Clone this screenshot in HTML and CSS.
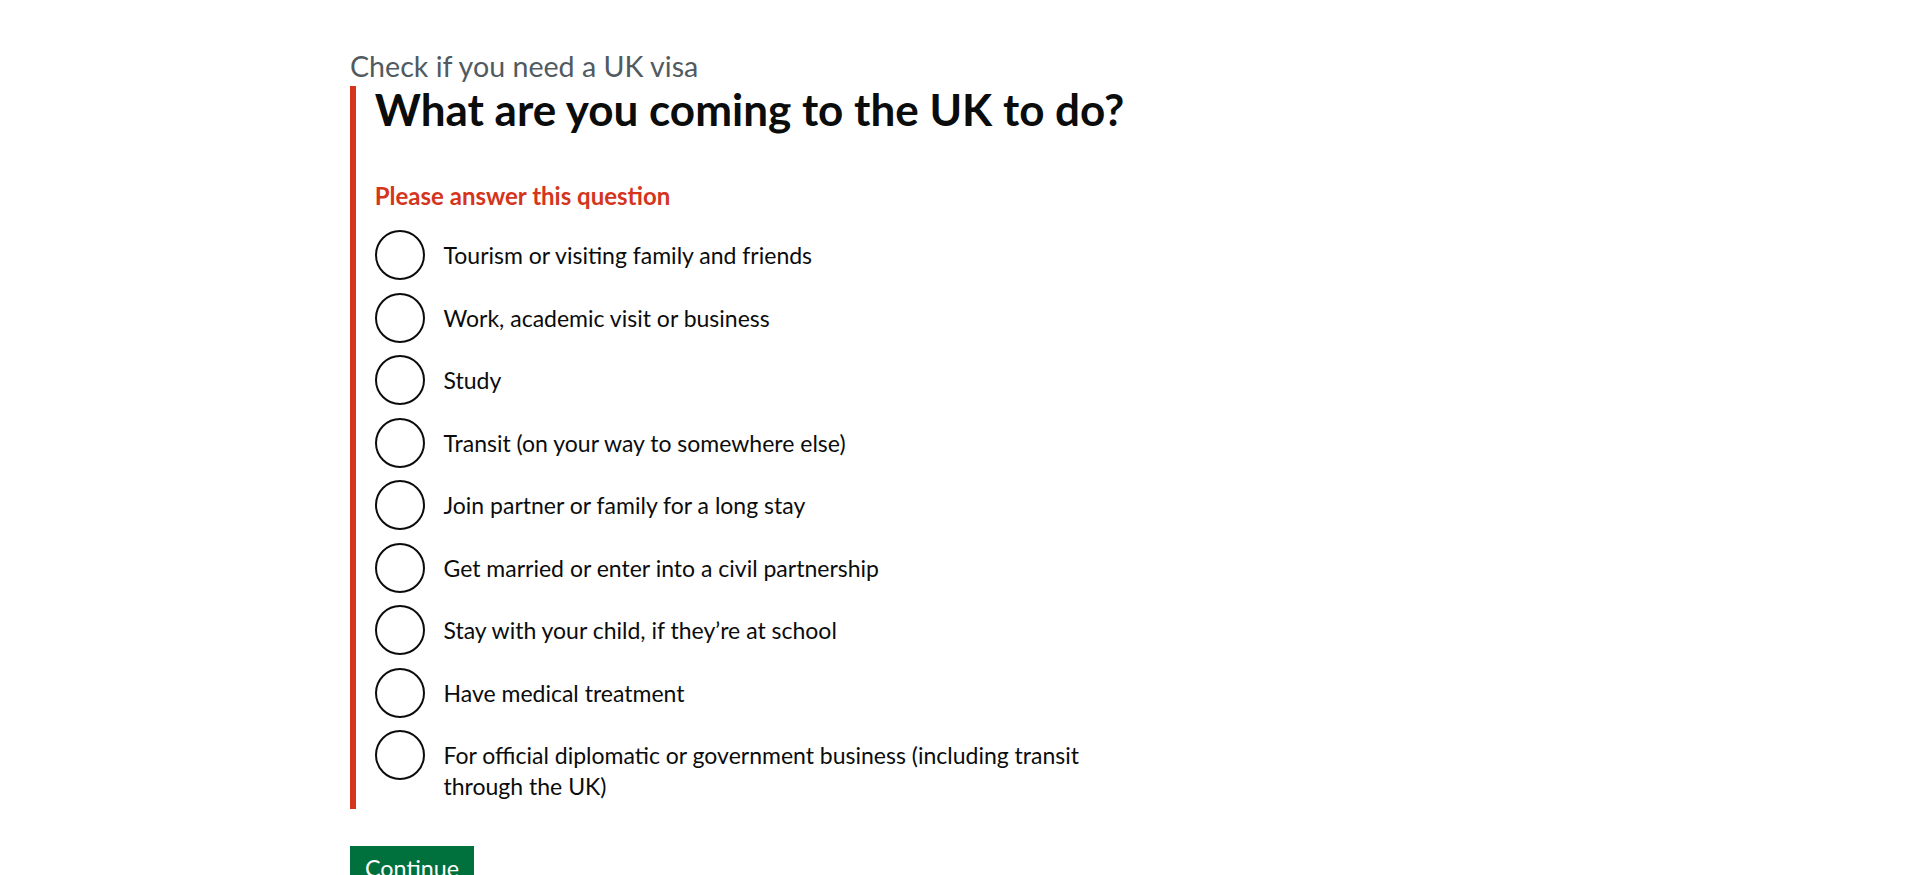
FILE: index.html
```html
<!DOCTYPE html>
<html lang="en">
<head>
<meta charset="utf-8">
<title>What are you coming to the UK to do? - Check if you need a UK visa - GOV.UK</title>
<link rel="stylesheet" href="styles.css">
</head>
<body>
<div class="width-container">
  <main class="main">
    <span class="caption">Check if you need a UK visa</span>
    <form class="form" action="#" method="get">
      <div class="form-group form-group--error">
        <fieldset class="fieldset">
          <legend class="legend">
            <h1 class="heading-xl">What are you coming to the UK to do?</h1>
          </legend>
          <p class="error-message">Please answer this question</p>
          <div class="radios">
            <label class="radio"><input class="radio-input" type="radio" name="purpose" value="tourism"><span class="radio-label">Tourism or visiting family and friends</span></label>
            <label class="radio"><input class="radio-input" type="radio" name="purpose" value="work"><span class="radio-label">Work, academic visit or business</span></label>
            <label class="radio"><input class="radio-input" type="radio" name="purpose" value="study"><span class="radio-label">Study</span></label>
            <label class="radio"><input class="radio-input" type="radio" name="purpose" value="transit"><span class="radio-label">Transit (on your way to somewhere else)</span></label>
            <label class="radio"><input class="radio-input" type="radio" name="purpose" value="family"><span class="radio-label">Join partner or family for a long stay</span></label>
            <label class="radio"><input class="radio-input" type="radio" name="purpose" value="marriage"><span class="radio-label">Get married or enter into a civil partnership</span></label>
            <label class="radio"><input class="radio-input" type="radio" name="purpose" value="school"><span class="radio-label">Stay with your child, if they’re at school</span></label>
            <label class="radio"><input class="radio-input" type="radio" name="purpose" value="medical"><span class="radio-label">Have medical treatment</span></label>
            <label class="radio"><input class="radio-input" type="radio" name="purpose" value="diplomatic"><span class="radio-label">For official diplomatic or government business (including transit through the UK)</span></label>
          </div>
        </fieldset>
      </div>
      <button class="button" type="submit">Continue</button>
    </form>
  </main>
</div>
</body>
</html>
```
FILE: styles.css
```css
html {
  background: #ffffff;
}

body {
  margin: 0;
  color: #0b0c0c;
  font-family: Lato, "Noto Sans", sans-serif;
}

.width-container {
  width: 1200px;
  margin: 0 0 0 350px;
}

.main {
  padding-top: 47.5px;
  padding-bottom: 60px;
}

.caption {
  display: block;
  color: #505a5f;
  font-size: 28.6px;
  line-height: 37.5px;
  margin-bottom: 1px;
}

.form {
  width: 800px;
}

.form-group {
  margin-bottom: 37.5px;
}

.form-group--error {
  border-left: 6px solid #d4351c;
  padding-left: 18.75px;
}

.fieldset {
  margin: 0;
  padding: 0;
  border: 0;
  min-width: 0;
}

.legend {
  padding: 0;
  display: block;
  width: 100%;
  margin-bottom: 48px;
}

.heading-xl {
  margin: 0;
  font-size: 44px;
  line-height: 46px;
  font-weight: 700;
  color: #0b0c0c;
}

.error-message {
  margin: 0 0 18.75px;
  color: #d4351c;
  font-size: 24px;
  font-weight: 700;
  line-height: 31.25px;
}

.radios {
  display: flex;
  flex-direction: column;
  gap: 12.5px;
}

.radio {
  display: flex;
  align-items: flex-start;
  min-height: 50px;
  cursor: pointer;
}

.radio-input {
  -webkit-appearance: none;
  appearance: none;
  flex: none;
  width: 50px;
  height: 50px;
  margin: 0;
  border: 2.5px solid #0b0c0c;
  border-radius: 50%;
  background: #ffffff;
  box-sizing: border-box;
}

.radio-label {
  padding: 10px 18.75px 6.25px;
  font-size: 23px;
  line-height: 31.25px;
  color: #0b0c0c;
}

.button {
  display: inline-block;
  margin: 0;
  padding: 10.5px 15px 9px;
  border: 0;
  border-radius: 0;
  background: #00703c;
  box-shadow: 0 2.5px 0 #002d18;
  color: #ffffff;
  font-family: Lato, "Noto Sans", sans-serif;
  font-size: 23.3px;
  line-height: 1;
  cursor: pointer;
}
```
